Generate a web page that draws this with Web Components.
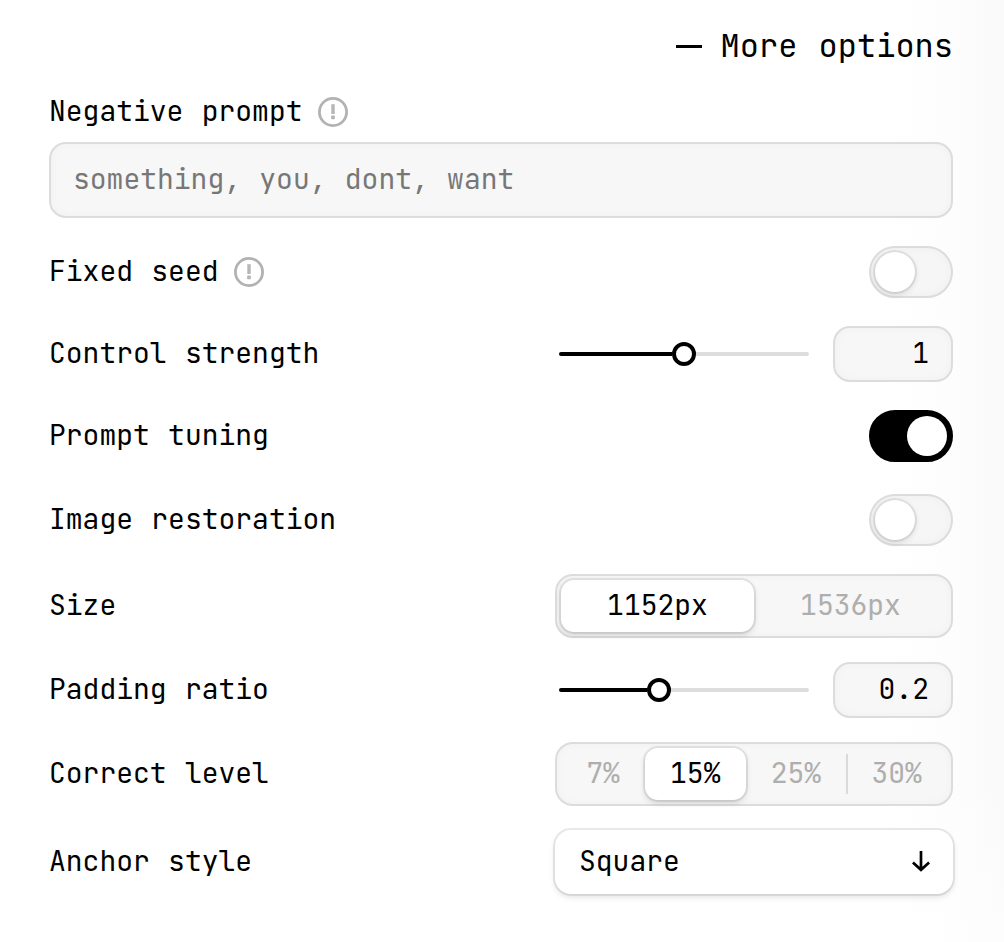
<!DOCTYPE html>
<html lang="en">
<head>
<meta charset="utf-8">
<title>More options</title>
<style>
html, body { margin: 0; height: 100%; }
body {
  background:
    linear-gradient(180deg, rgba(255,255,255,0) 80%, rgba(255,255,255,.6) 100%),
    linear-gradient(90deg, #fff 0, #fff 890px, #fdfdfd 950px, #f9f9f9 1004px);
  overflow: hidden;
}
</style>
</head>
<body>
<options-panel></options-panel>
<script>
const define = (name, html, setup) => customElements.define(name, class extends HTMLElement {
  constructor() {
    super();
    this.attachShadow({ mode: 'open' }).innerHTML = html;
  }
  connectedCallback() { if (setup) setup(this, this.shadowRoot); }
});

define('info-icon', `
<style>:host{display:block;width:30px;height:30px} svg{display:block}</style>
<svg width="30" height="30" viewBox="0 0 30 30" fill="none">
  <circle cx="15" cy="15" r="13.6" stroke="#b2b2b2" stroke-width="2.8"/>
  <path d="M15 7.2V17" stroke="#b6b6b6" stroke-width="3.4"/>
  <rect x="13.1" y="18.6" width="3.8" height="3.6" rx=".8" fill="#b6b6b6"/>
</svg>`);

define('option-row', `
<style>
:host{display:flex;align-items:center;justify-content:space-between;margin-top:var(--gap,28px)}
.label{display:flex;align-items:center;gap:15px;line-height:36px}
.text{position:relative;top:-1px}
.control{display:flex;align-items:center;gap:24px}
</style>
<div class="label"><span class="text"><slot name="label"></slot></span><slot name="hint"></slot></div>
<div class="control"><slot></slot></div>`);

define('toggle-switch', `
<style>
:host{display:flex;box-sizing:border-box;width:84px;height:52px;padding:4px;border:2px solid #dcdcdc;border-radius:26px;background:#f6f6f6;box-shadow:inset 0 0 10px rgba(0,0,0,.035)}
:host([checked]){background:#000;border-color:#000;justify-content:flex-end;box-shadow:none}
.knob{width:40px;height:40px;border-radius:50%;background:#fff;box-shadow:0 0 0 2px rgba(0,0,0,.07),0 2px 6px rgba(0,0,0,.14)}
:host([checked]) .knob{box-shadow:none}
</style>
<div class="knob"></div>`);

define('range-slider', `
<style>
:host{display:flex;align-items:center;width:250px;height:24px}
.fill{height:4px;background:#000;border-radius:2px 0 0 2px;width:calc(var(--value) - 12px)}
.thumb{box-sizing:border-box;width:24px;height:24px;border:4px solid #000;border-radius:50%;background:#fff}
.rest{flex:1;height:4px;background:#ddd;border-radius:0 2px 2px 0}
</style>
<div class="fill"></div><div class="thumb"></div><div class="rest"></div>`,
(host) => host.style.setProperty('--value', host.getAttribute('value')));

define('field-box', `
<style>
:host{display:flex;align-items:center;box-sizing:border-box;width:120px;height:56px;padding:0 22px;justify-content:flex-end;border:2px solid #dcdcdc;border-radius:17px;background:#f7f7f7;box-shadow:inset 0 0 10px rgba(0,0,0,.03)}
:host([wide]){width:100%;height:76px;justify-content:flex-start;color:#777;margin-top:12px}
span{position:relative;top:-1px}
</style>
<span><slot></slot></span>`);

define('segment-item', `
<style>
:host{display:flex;flex:1 1 auto;align-items:center;justify-content:center;box-sizing:border-box;height:52px;border-radius:13px;color:#aeaeae;position:relative}
:host([selected]){background:#fff;color:#000;box-shadow:0 0 0 2px rgba(0,0,0,.08),0 3px 6px rgba(0,0,0,.14)}
:host([divided])::before{content:"";position:absolute;left:0;top:6px;width:2px;height:40px;background:#dadada}
span{position:relative;top:-1px}
</style>
<span><slot></slot></span>`);

define('segmented-control', `
<style>
:host{display:flex;box-sizing:border-box;width:398px;height:64px;padding:4px;border:2px solid #dcdcdc;border-radius:18px;background:#f7f7f7;box-shadow:inset 0 0 10px rgba(0,0,0,.03)}
</style>
<slot></slot>`);

define('select-box', `
<style>
:host{display:flex;align-items:center;justify-content:space-between;box-sizing:border-box;width:398px;height:64px;padding:0 23px 0 24px;border-radius:16px;background:#fff;box-shadow:0 0 0 2px rgba(0,0,0,.08),0 3px 6px rgba(0,0,0,.12)}
span{position:relative;top:-1px}
svg{margin-top:-2px}
</style>
<span><slot></slot></span>
<svg width="18" height="22" viewBox="0 0 18 22" fill="none" stroke="#000" stroke-width="2.7"><path d="M9 1V20M.9 12.4 9 19.8 17.1 12.4"/></svg>`);

define('panel-heading', `
<style>
:host{display:flex;align-items:center;justify-content:flex-end;gap:18.5px;height:40px;font-size:32px;word-spacing:2px}
i{width:26px;height:3px;background:#000;margin-top:1px}
</style>
<i></i><span><slot></slot></span>`);

define('options-panel', `
<style>
:host{display:block;box-sizing:border-box;width:1004px;height:942px;padding:26px 51px 0 49px;color:#000;font:28px/36px "JetBrains Mono","DejaVu Sans Mono",monospace;word-spacing:1.5px}
</style>
<panel-heading>More options</panel-heading>
<option-row style="--gap:28px"><span slot="label">Negative prompt</span><info-icon slot="hint"></info-icon></option-row>
<field-box wide>something, you, dont, want</field-box>
<option-row><span slot="label">Fixed seed</span><info-icon slot="hint"></info-icon><toggle-switch></toggle-switch></option-row>
<option-row><span slot="label">Control strength</span><range-slider value="125px"></range-slider><field-box>1</field-box></option-row>
<option-row><span slot="label">Prompt tuning</span><toggle-switch checked></toggle-switch></option-row>
<option-row style="--gap:32px"><span slot="label">Image restoration</span><toggle-switch></toggle-switch></option-row>
<option-row><span slot="label">Size</span><segmented-control><segment-item selected>1152px</segment-item><segment-item>1536px</segment-item></segmented-control></option-row>
<option-row style="--gap:24px"><span slot="label">Padding ratio</span><range-slider value="100px"></range-slider><field-box>0.2</field-box></option-row>
<option-row style="--gap:24px"><span slot="label">Correct level</span><segmented-control><segment-item>7%</segment-item><segment-item selected>15%</segment-item><segment-item>25%</segment-item><segment-item divided>30%</segment-item></segmented-control></option-row>
<option-row style="--gap:24px"><span slot="label">Anchor style</span><select-box>Square</select-box></option-row>`);
</script>
</body>
</html>
